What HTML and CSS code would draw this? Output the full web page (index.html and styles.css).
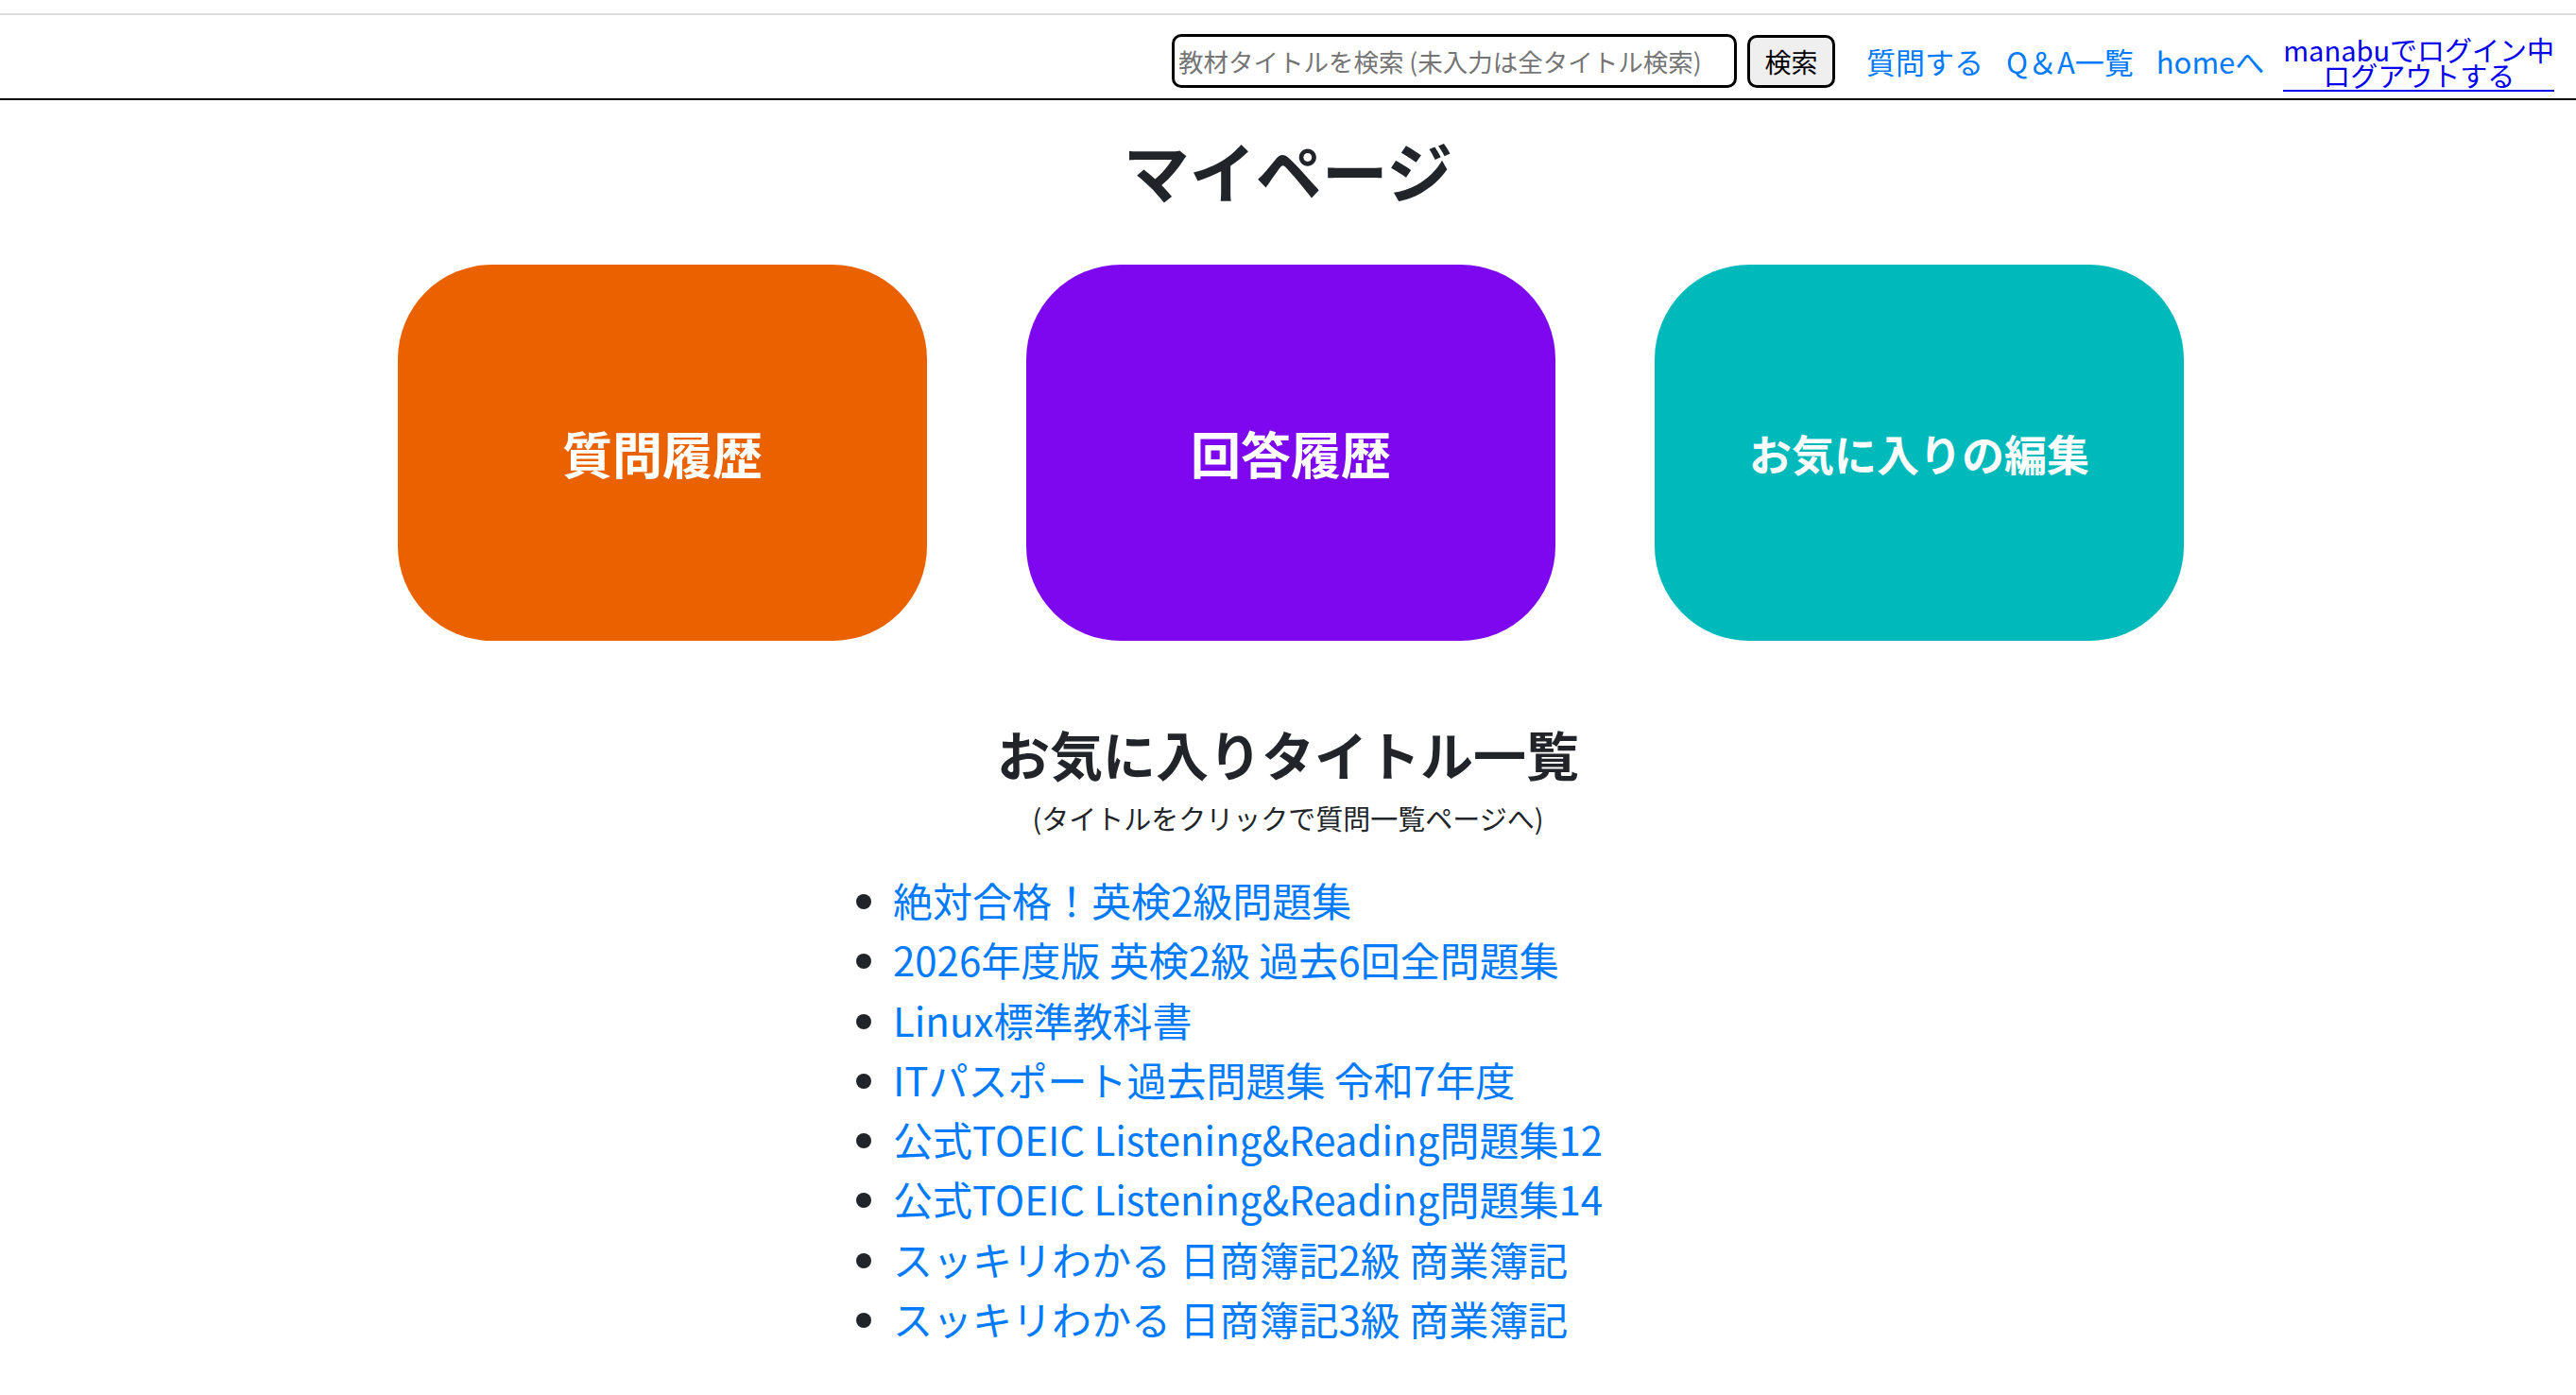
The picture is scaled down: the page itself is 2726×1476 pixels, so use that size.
FILE: index.html
```html
<!DOCTYPE html>
<html lang="ja">
<head>
<meta charset="utf-8">
<title>マイページ</title>
<link rel="stylesheet" href="styles.css">
</head>
<body>
<header class="navbar">
  <form class="search">
    <input class="search-input" type="text" placeholder="教材タイトルを検索 (未入力は全タイトル検索)">
    <button class="search-btn" type="button">検索</button>
  </form>
  <nav class="nav-links">
    <a class="nav-link" href="#">質問する</a>
    <a class="nav-link" href="#">Q＆A一覧</a>
    <a class="nav-link" href="#">homeへ</a>
    <a class="login" href="#"><span class="login-line">manabuでログイン中</span><span class="login-line">ログアウトする</span></a>
  </nav>
</header>
<main class="main">
  <h1 class="title">マイページ</h1>
  <div class="cards">
    <a class="card card-orange" href="#"><span class="card-text">質問履歴</span></a>
    <a class="card card-purple" href="#"><span class="card-text">回答履歴</span></a>
    <a class="card card-teal" href="#"><span class="card-text card-text-small">お気に入りの編集</span></a>
  </div>
  <h2 class="subtitle">お気に入りタイトル一覧</h2>
  <p class="note">(タイトルをクリックで質問一覧ページへ)</p>
  <div class="fav-wrap">
    <ul class="fav-list">
      <li><a href="#">絶対合格！英検2級問題集</a></li>
      <li><a href="#">2026年度版 英検2級 過去6回全問題集</a></li>
      <li><a href="#">Linux標準教科書</a></li>
      <li><a href="#">ITパスポート過去問題集 令和7年度</a></li>
      <li><a href="#">公式TOEIC Listening&amp;Reading問題集12</a></li>
      <li><a href="#">公式TOEIC Listening&amp;Reading問題集14</a></li>
      <li><a href="#">スッキリわかる 日商簿記2級 商業簿記</a></li>
      <li><a href="#">スッキリわかる 日商簿記3級 商業簿記</a></li>
    </ul>
  </div>
</main>
</body>
</html>
```

FILE: styles.css
```css
* { box-sizing: border-box; }

html, body {
  margin: 0;
  padding: 0;
  background: #fff;
}

body {
  font-family: "Noto Sans CJK JP", "Noto Sans", sans-serif;
  color: #212529;
  font-size: 28px;
}

a { text-decoration: none; }

.navbar {
  margin-top: 14px;
  height: 92px;
  border-top: 2px solid #dcdcdc;
  border-bottom: 2px solid #000;
  display: flex;
  justify-content: flex-end;
  align-items: center;
  padding-right: 23px;
  padding-top: 9px;
}

.search {
  display: flex;
  align-items: center;
  margin: 0;
}

.search-input {
  width: 598px;
  height: 57px;
  border: 3px solid #000;
  border-radius: 10px;
  padding: 0 4px;
  font-family: "Noto Sans CJK JP", sans-serif;
  font-size: 26.5px;
  color: #212529;
  background: #fff;
  outline: none;
}

.search-input::placeholder {
  color: #757575;
}

.search-btn {
  margin-left: 11px;
  width: 93px;
  height: 56px;
  border: 3px solid #000;
  border-radius: 10px;
  background: #efefef;
  font-family: "Noto Sans CJK JP", sans-serif;
  font-size: 28px;
  color: #000;
  padding: 0;
  line-height: 1;
}

.nav-links {
  display: flex;
  align-items: center;
  margin-left: 33px;
  gap: 24px;
}

.nav-link {
  color: #007bff;
  font-size: 31px;
  line-height: 1.2;
}

.nav-link:nth-child(3) {
  margin-right: -4px;
}

.login {
  display: flex;
  flex-direction: column;
  align-items: center;
  color: #0000ee;
  font-size: 29px;
  line-height: 27px;
  border-bottom: 2px solid #0000ee;
  padding-bottom: 2px;
  margin-top: 6px;
}

.login-line {
  display: block;
  white-space: nowrap;
}

.main {
  text-align: center;
}

.title {
  margin: 32px 0 0;
  font-size: 70px;
  line-height: 84px;
  font-weight: 700;
  color: #212529;
}

.cards {
  margin-top: 58px;
  display: flex;
  justify-content: center;
  gap: 105px;
  padding-left: 6px;
}

.card {
  width: 560px;
  height: 398px;
  border-radius: 100px;
  display: flex;
  align-items: center;
  justify-content: center;
  color: #fff;
}

.card-orange { background: #ea6200; }
.card-purple { background: #7d08f0; }
.card-teal { background: #00b9ba; }

.card-text {
  font-size: 53px;
  font-weight: 700;
  line-height: 1;
}

.card-text-small {
  font-size: 45px;
}

.subtitle {
  margin: 85px 0 0;
  font-size: 56px;
  line-height: 67px;
  font-weight: 700;
  color: #212529;
}

.note {
  margin: 14px 0 0;
  font-size: 29px;
  line-height: 42px;
}

.fav-wrap {
  margin-top: 34px;
  display: flex;
  justify-content: center;
}

.fav-list {
  width: 976px;
  margin: 0;
  padding-left: 70px;
  text-align: left;
  list-style: disc;
}

.fav-list li {
  font-size: 42px;
  line-height: 63.3px;
}

.fav-list a {
  color: #007bff;
}
```
